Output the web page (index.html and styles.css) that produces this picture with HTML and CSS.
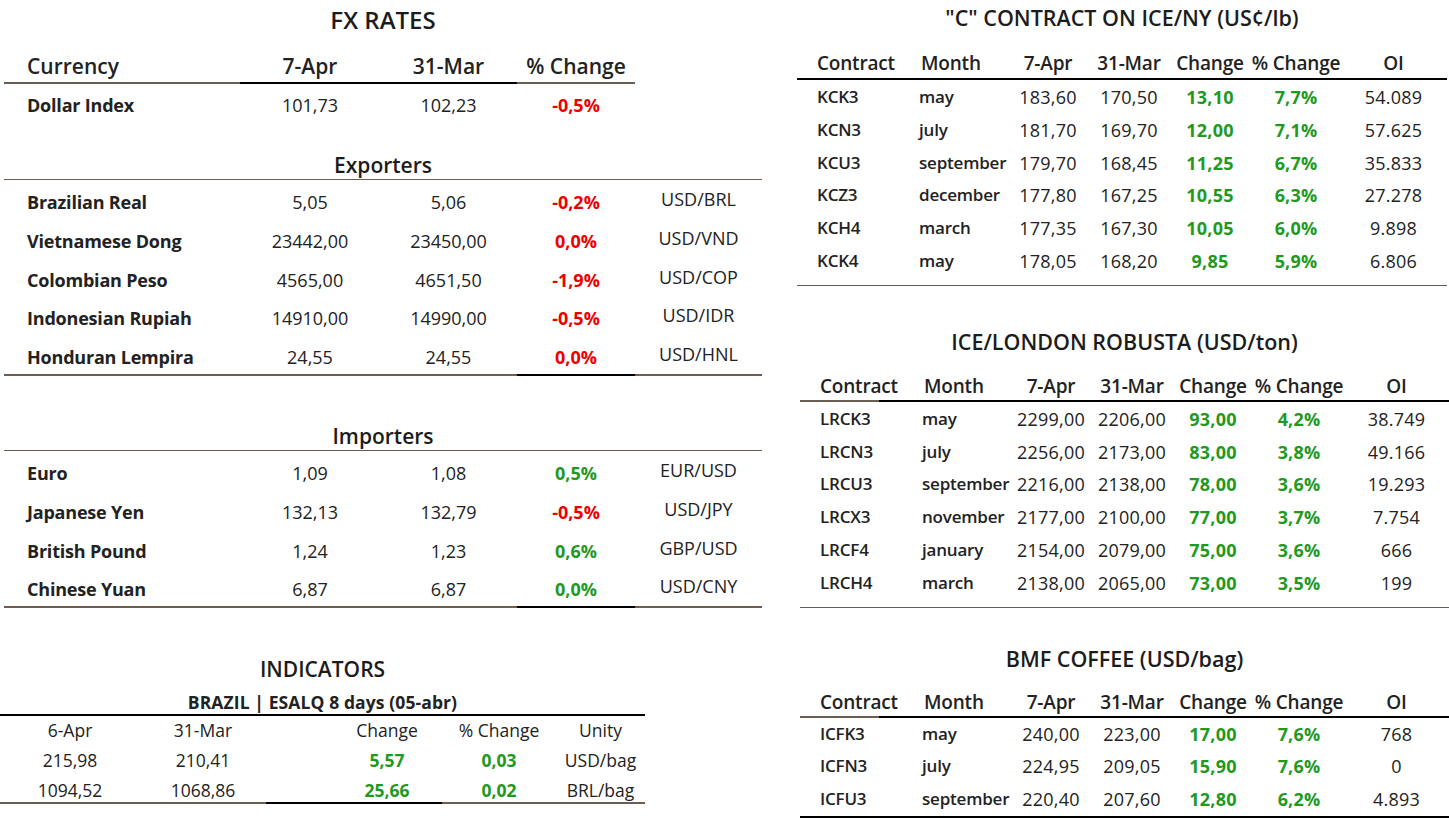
FILE: index.html
```html
<!DOCTYPE html>
<html lang="en">
<head>
<meta charset="utf-8">
<title>Market Rates</title>
<link rel="stylesheet" href="styles.css">
</head>
<body>
<div class="page">
  <section class="left">
    <div class="fx">
      <h2 class="title fx-title">FX RATES</h2>
      <div class="fx-row fx-head">
        <div class="c1 bb-brown">Currency</div>
        <div class="cc bb-black">7-Apr</div>
        <div class="cc bb-black">31-Mar</div>
        <div class="cc bb-brown">% Change</div>
        <div class="cc"></div>
      </div>
      <div class="fx-row fx-dollar">
        <div class="c1 name">Dollar Index</div>
        <div class="cc">101,73</div>
        <div class="cc">102,23</div>
        <div class="cc neg">-0,5%</div>
        <div class="cc"></div>
      </div>

      <div class="sub-title exp">Exporters</div>
      <div class="fx-row">
        <div class="c1 name">Brazilian Real</div>
        <div class="cc">5,05</div>
        <div class="cc">5,06</div>
        <div class="cc neg">-0,2%</div>
        <div class="cc pair">USD/BRL</div>
      </div>
      <div class="fx-row">
        <div class="c1 name">Vietnamese Dong</div>
        <div class="cc">23442,00</div>
        <div class="cc">23450,00</div>
        <div class="cc neg">0,0%</div>
        <div class="cc pair">USD/VND</div>
      </div>
      <div class="fx-row">
        <div class="c1 name">Colombian Peso</div>
        <div class="cc">4565,00</div>
        <div class="cc">4651,50</div>
        <div class="cc neg">-1,9%</div>
        <div class="cc pair">USD/COP</div>
      </div>
      <div class="fx-row">
        <div class="c1 name">Indonesian Rupiah</div>
        <div class="cc">14910,00</div>
        <div class="cc">14990,00</div>
        <div class="cc neg">-0,5%</div>
        <div class="cc pair">USD/IDR</div>
      </div>
      <div class="fx-row last">
        <div class="c1 name bb-brown">Honduran Lempira</div>
        <div class="cc bb-brown">24,55</div>
        <div class="cc bb-brown">24,55</div>
        <div class="cc neg bb-black">0,0%</div>
        <div class="cc pair bb-brown">USD/HNL</div>
      </div>

      <div class="sub-title imp">Importers</div>
      <div class="fx-row">
        <div class="c1 name">Euro</div>
        <div class="cc">1,09</div>
        <div class="cc">1,08</div>
        <div class="cc pos b">0,5%</div>
        <div class="cc pair">EUR/USD</div>
      </div>
      <div class="fx-row">
        <div class="c1 name">Japanese Yen</div>
        <div class="cc">132,13</div>
        <div class="cc">132,79</div>
        <div class="cc neg">-0,5%</div>
        <div class="cc pair">USD/JPY</div>
      </div>
      <div class="fx-row">
        <div class="c1 name">British Pound</div>
        <div class="cc">1,24</div>
        <div class="cc">1,23</div>
        <div class="cc pos b">0,6%</div>
        <div class="cc pair">GBP/USD</div>
      </div>
      <div class="fx-row last">
        <div class="c1 name bb-brown">Chinese Yuan</div>
        <div class="cc bb-brown">6,87</div>
        <div class="cc bb-brown">6,87</div>
        <div class="cc pos b bb-black">0,0%</div>
        <div class="cc pair bb-brown">USD/CNY</div>
      </div>
    </div>

    <div class="ind">
      <h2 class="title ind-title">INDICATORS</h2>
      <div class="ind-sub">BRAZIL | ESALQ 8 days (05-abr)</div>
      <div class="ind-row ind-head">
        <div>6-Apr</div>
        <div>31-Mar</div>
        <div class="i3">Change</div>
        <div>% Change</div>
        <div>Unity</div>
      </div>
      <div class="ind-row">
        <div>215,98</div>
        <div>210,41</div>
        <div class="i3 pos b">5,57</div>
        <div class="pos b">0,03</div>
        <div>USD/bag</div>
      </div>
      <div class="ind-row last">
        <div class="bb-brown">1094,52</div>
        <div class="bb-brown">1068,86</div>
        <div class="i3 pos b bb-black">25,66</div>
        <div class="pos b bb-brown">0,02</div>
        <div class="bb-brown">BRL/bag</div>
      </div>
    </div>
  </section>

  <section class="right">
    <div class="fut ny">
      <h2 class="title fut-title">"C" CONTRACT ON ICE/NY (US¢/lb)</h2>
      <div class="fut-row fut-head">
        <div class="f1">Contract</div><div class="f2">Month</div><div>7-Apr</div><div>31-Mar</div><div>Change</div><div>% Change</div><div>OI</div>
      </div>
      <div class="fut-body">
        <div class="fut-row"><div class="f1 name">KCK3</div><div class="f2 name">may</div><div>183,60</div><div>170,50</div><div class="pos b">13,10</div><div class="pos b">7,7%</div><div>54.089</div></div>
        <div class="fut-row"><div class="f1 name">KCN3</div><div class="f2 name">july</div><div>181,70</div><div>169,70</div><div class="pos b">12,00</div><div class="pos b">7,1%</div><div>57.625</div></div>
        <div class="fut-row"><div class="f1 name">KCU3</div><div class="f2 name">september</div><div>179,70</div><div>168,45</div><div class="pos b">11,25</div><div class="pos b">6,7%</div><div>35.833</div></div>
        <div class="fut-row"><div class="f1 name">KCZ3</div><div class="f2 name">december</div><div>177,80</div><div>167,25</div><div class="pos b">10,55</div><div class="pos b">6,3%</div><div>27.278</div></div>
        <div class="fut-row"><div class="f1 name">KCH4</div><div class="f2 name">march</div><div>177,35</div><div>167,30</div><div class="pos b">10,05</div><div class="pos b">6,0%</div><div>9.898</div></div>
        <div class="fut-row"><div class="f1 name">KCK4</div><div class="f2 name">may</div><div>178,05</div><div>168,20</div><div class="pos b">9,85</div><div class="pos b">5,9%</div><div>6.806</div></div>
      </div>
      <div class="fut-rule"></div>
    </div>

    <div class="fut robusta">
      <h2 class="title fut-title">ICE/LONDON ROBUSTA (USD/ton)</h2>
      <div class="fut-row fut-head split">
        <div class="f1">Contract</div><div class="f2">Month</div><div>7-Apr</div><div>31-Mar</div><div>Change</div><div>% Change</div><div>OI</div>
      </div>
      <div class="fut-body">
        <div class="fut-row"><div class="f1 name">LRCK3</div><div class="f2 name">may</div><div>2299,00</div><div>2206,00</div><div class="pos b">93,00</div><div class="pos b">4,2%</div><div>38.749</div></div>
        <div class="fut-row"><div class="f1 name">LRCN3</div><div class="f2 name">july</div><div>2256,00</div><div>2173,00</div><div class="pos b">83,00</div><div class="pos b">3,8%</div><div>49.166</div></div>
        <div class="fut-row"><div class="f1 name">LRCU3</div><div class="f2 name">september</div><div>2216,00</div><div>2138,00</div><div class="pos b">78,00</div><div class="pos b">3,6%</div><div>19.293</div></div>
        <div class="fut-row"><div class="f1 name">LRCX3</div><div class="f2 name">november</div><div>2177,00</div><div>2100,00</div><div class="pos b">77,00</div><div class="pos b">3,7%</div><div>7.754</div></div>
        <div class="fut-row"><div class="f1 name">LRCF4</div><div class="f2 name">january</div><div>2154,00</div><div>2079,00</div><div class="pos b">75,00</div><div class="pos b">3,6%</div><div>666</div></div>
        <div class="fut-row"><div class="f1 name">LRCH4</div><div class="f2 name">march</div><div>2138,00</div><div>2065,00</div><div class="pos b">73,00</div><div class="pos b">3,5%</div><div>199</div></div>
      </div>
      <div class="fut-rule"></div>
    </div>

    <div class="fut bmf">
      <h2 class="title fut-title">BMF COFFEE (USD/bag)</h2>
      <div class="fut-row fut-head split">
        <div class="f1">Contract</div><div class="f2">Month</div><div>7-Apr</div><div>31-Mar</div><div>Change</div><div>% Change</div><div>OI</div>
      </div>
      <div class="fut-body">
        <div class="fut-row"><div class="f1 name">ICFK3</div><div class="f2 name">may</div><div>240,00</div><div>223,00</div><div class="pos b">17,00</div><div class="pos b">7,6%</div><div>768</div></div>
        <div class="fut-row"><div class="f1 name">ICFN3</div><div class="f2 name">july</div><div>224,95</div><div>209,05</div><div class="pos b">15,90</div><div class="pos b">7,6%</div><div>0</div></div>
        <div class="fut-row"><div class="f1 name">ICFU3</div><div class="f2 name">september</div><div>220,40</div><div>207,60</div><div class="pos b">12,80</div><div class="pos b">6,2%</div><div>4.893</div></div>
      </div>
    </div>
  </section>
</div>
</body>
</html>
```
FILE: styles.css
```css
* { box-sizing: border-box; }
html, body { margin: 0; padding: 0; background: #fff; }
body {
  font-family: "Open Sans", "Liberation Sans", sans-serif;
  color: #222;
  width: 1449px;
  height: 819px;
  overflow: hidden;
}
.page { display: flex; align-items: flex-start; }

.title { margin: 0; font-weight: 600; text-align: center; color: #1c1c1c; }

.neg { color: #ee0000; font-weight: 700; }
.pos { color: #1f9a1f; }
.b { font-weight: 700; }
.name { font-weight: 600; }

.bb-brown { border-bottom: 2px solid #6b5d52; }
.bb-black { border-bottom: 2px solid #000; }

/* ---------- left column ---------- */
.left { width: 790px; flex: 0 0 790px; }
.fx { margin-left: 4px; width: 758px; }
.fx-title { font-size: 24px; line-height: 40px; margin-left: -4px; width: 766px; }

.fx-row {
  display: grid;
  grid-template-columns: 236px 140px 137px 118px 127px;
  height: 38.75px;
  font-size: 18px;
}
.fx-row > div { padding-top: 7px; line-height: 24px; white-space: nowrap; }
.fx-row .c1 { padding-left: 23px; }
.fx-row .cc { text-align: center; }
.fx-row .pair { padding-top: 4px; font-weight: 400; }
.fx-row .name { font-weight: 700; letter-spacing: -0.2px; }
.fx-row.last { height: 38px; }

.fx-head { height: 44px; font-size: 21px; font-weight: 600; }
.fx-head > div { padding-top: 14px; line-height: 24px; }
.fx-dollar { height: 42px; }
.fx-dollar > div { padding-top: 9px; }

.sub-title {
  text-align: center;
  font-size: 21px;
  font-weight: 600;
  line-height: 26px;
  padding-bottom: 1px;
  border-bottom: 1px solid #6b5d52;
  margin-bottom: 3px;
  color: #1c1c1c;
}
.sub-title.exp { padding-top: 26px; }
.sub-title.imp { padding-top: 47px; }

/* ---------- indicators ---------- */
.ind { width: 645px; }
.ind-title { font-size: 21px; line-height: 30px; padding-top: 46px; }
.ind-sub {
  margin-top: 8px;
  text-align: center;
  font-size: 17.5px;
  font-weight: 700;
  line-height: 20px;
  padding-bottom: 2px;
  border-bottom: 2px solid #000;
  letter-spacing: 0.1px;
}
.ind-row {
  display: grid;
  grid-template-columns: 140px 126px 176px 114px 89px;
  height: 30px;
  font-size: 17.5px;
}
.ind-row > div { text-align: center; padding-top: 3px; line-height: 24px; white-space: nowrap; }
.ind-row .i3 { padding-left: 66px; }
.ind-head { height: 29px; }
.ind-head > div { padding-top: 2px; }
.ind-row.last { height: 29px; }

/* ---------- right column ---------- */
.right { flex: 0 0 652px; width: 652px; margin-left: 7px; }
.fut { width: 650px; }
.fut.robusta, .fut.bmf { margin-left: 3px; width: 649px; }

.fut-title { font-size: 21.5px; line-height: 30px; }
.ny .fut-title { line-height: 36px; }
.robusta .fut-title { margin-top: 41px; }
.bmf .fut-title { margin-top: 36px; }

.fut-row {
  display: grid;
  grid-template-columns: 120px 90px 82px 80px 82px 90px 105px;
  height: 32.8px;
  font-size: 18px;
  letter-spacing: 0.2px;
}
.fut-row > div { text-align: center; line-height: 32.8px; white-space: nowrap; }
.fut-row .f1 { text-align: left; padding-left: 20px; }
.fut-row .f2 { text-align: left; padding-left: 2px; }
.fut-row .name { font-weight: 600; font-size: 17px; letter-spacing: -0.2px; }

.fut-head {
  height: auto;
  font-size: 19px;
  font-weight: 600;
  padding-top: 15px;
  padding-bottom: 3px;
  border-bottom: 2px solid #000;
  letter-spacing: -0.2px;
}
.fut-head > div { line-height: 24px; }
.fut-head .f2 { padding-left: 4px; }
.robusta .fut-head { padding-top: 17px; padding-bottom: 2px; }
.bmf .fut-head { padding-top: 16px; padding-bottom: 2px; }
.fut-head.split {
  border-bottom: 2px solid #000;
  border-image: linear-gradient(to right, #6b5d52 80px, #000 80px) 1;
}

.fut-body { margin-top: 1px; }
.bmf .fut-body { border-bottom: 2px solid #000; margin-top: 0; }

.fut-rule { margin-top: 7px; border-top: 1px solid #6b5d52; }
```
